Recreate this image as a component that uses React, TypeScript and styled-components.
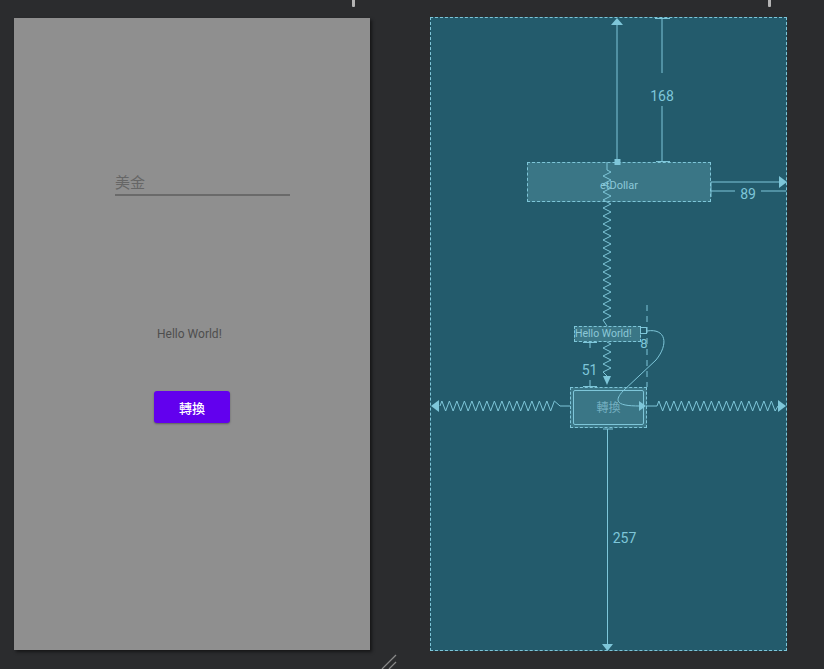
import React from "react";
import styled, { createGlobalStyle } from "styled-components";

const LINE = "#7ec6d9";
const BG = "#2b2c2e";

const GlobalStyle = createGlobalStyle`
  html, body {
    margin: 0;
    padding: 0;
    background: ${BG};
    width: 824px;
    height: 669px;
    overflow: hidden;
  }
`;

const Workspace = styled.div`
  position: relative;
  width: 824px;
  height: 669px;
  box-sizing: border-box;
  padding: 17px 0 0 14px;
  display: flex;
  align-items: flex-start;
  gap: 60px;
  font-family: Roboto, "Noto Sans CJK TC", sans-serif;
`;

const DevicePreview = styled.div`
  width: 356px;
  height: 632px;
  margin-top: 1px;
  background: #8f8f8f;
  box-shadow: 2px 2px 3px rgba(0, 0, 0, 0.5);
  display: flex;
  flex-direction: column;
  align-items: flex-start;
`;

const EditText = styled.div`
  margin: 154px 0 0 101px;
  width: 175px;
  border-bottom: 2px solid #6a6a6a;
  font-family: Roboto, "Noto Sans CJK TC", sans-serif;
  font-size: 15px;
  line-height: 22px;
  color: #666666;
`;

const Label = styled.div`
  margin: 131px 0 0 143px;
  font-family: Roboto, sans-serif;
  font-size: 12px;
  line-height: 14px;
  color: #4e4e4e;
`;

const PrimaryButton = styled.div`
  margin: 50px 0 0 140px;
  width: 76px;
  height: 32px;
  border-radius: 3px;
  background: #6200ee;
  box-shadow: 0 1px 2px rgba(0, 0, 0, 0.35);
  display: flex;
  align-items: center;
  justify-content: center;
  color: #ffffff;
  font-family: "Noto Sans CJK TC", sans-serif;
  font-size: 13px;
  font-weight: 500;
`;

const Blueprint = styled.div`
  position: relative;
  width: 357px;
  height: 634px;
  box-sizing: border-box;
  border: 1px dashed ${LINE};
  background: #235b6c;
`;

const Widget = styled.div<{
  $x: number;
  $y: number;
  $w: number;
  $h: number;
  $size: number;
  $start?: boolean;
  $dy?: number;
}>`
  position: absolute;
  left: ${(p) => p.$x - 431}px;
  top: ${(p) => p.$y - 18}px;
  width: ${(p) => p.$w}px;
  height: ${(p) => p.$h}px;
  box-sizing: border-box;
  border: 1px dashed ${LINE};
  background: #3a7686;
  padding-top: ${(p) => p.$dy ?? 0}px;
  display: flex;
  align-items: center;
  justify-content: ${(p) => (p.$start ? "flex-start" : "center")};
  color: #8cc8d8;
  font-family: Roboto, "Noto Sans CJK TC", sans-serif;
  font-size: ${(p) => p.$size}px;
  line-height: 1;
  white-space: nowrap;
  overflow: hidden;
`;

const InnerFrame = styled.div`
  flex: 1;
  align-self: stretch;
  margin: 2px;
  border: 1px solid ${LINE};
  border-radius: 2px;
  display: flex;
  align-items: center;
  justify-content: center;
  color: #74afc0;
`;

const ConstraintLayer = styled.svg`
  position: absolute;
  left: -1px;
  top: -1px;
  pointer-events: none;
  overflow: visible;
`;

const ScrollTick = styled.div<{ $x: number }>`
  position: absolute;
  left: ${(p) => p.$x}px;
  top: 0;
  width: 3px;
  height: 7px;
  border-radius: 0 0 1px 1px;
  background: #b4b4b4;
`;

const ResizeGrip = styled.svg`
  position: absolute;
  left: 378px;
  top: 652px;
`;

function zigV(x: number, y1: number, y2: number, amp = 4, half = 4) {
  const parts = [`M${x},${y1}`];
  let s = 1;
  for (let y = y1 + half / 2; y < y2 - half / 2; y += half) {
    parts.push(`L${x + amp * s},${y}`);
    s = -s;
  }
  parts.push(`L${x},${y2}`);
  return parts.join(" ");
}

function zigH(y: number, x1: number, x2: number, amp = 5, half = 3.75) {
  const parts = [`M${x1},${y}`];
  let s = -1;
  for (let x = x1 + half / 2; x < x2 - half / 2; x += half) {
    parts.push(`L${x},${y + amp * s}`);
    s = -s;
  }
  parts.push(`L${x2},${y}`);
  return parts.join(" ");
}

const dimText = {
  fill: LINE,
  fontFamily: "Roboto, sans-serif",
  fontSize: 14,
  textAnchor: "middle" as const,
};

export default function App() {
  return (
    <>
      <GlobalStyle />
      <Workspace>
        <ScrollTick $x={352} />
        <ScrollTick $x={768} />
        <DevicePreview>
          <EditText>美金</EditText>
          <Label>Hello World!</Label>
          <PrimaryButton>轉換</PrimaryButton>
        </DevicePreview>

        <Blueprint>
          <Widget $x={527} $y={162} $w={184} $h={40} $size={11} $dy={6}>
            etDollar
          </Widget>
          <Widget $x={574} $y={326} $w={67} $h={16} $size={10.5} $start>
            Hello World!
          </Widget>
          <Widget $x={570} $y={387} $w={77} $h={41} $size={12}>
            <InnerFrame>轉換</InnerFrame>
          </Widget>

          <ConstraintLayer width={357} height={634} viewBox="430 17 357 634">
            <g stroke={LINE} strokeWidth={1} fill="none">
              {/* top constraint of etDollar */}
              <line x1={617} y1={19} x2={617} y2={161} />
              <line x1={662} y1={18} x2={662} y2={73} />
              <line x1={662} y1={106} x2={662} y2={161} />
              <line x1={655} y1={18.5} x2={670} y2={18.5} />
              <line x1={656} y1={161.5} x2={670} y2={161.5} />

              {/* right constraint of etDollar */}
              <line x1={711} y1={182} x2={780} y2={182} />
              <line x1={711} y1={191} x2={735} y2={191} />
              <line x1={761} y1={191} x2={786} y2={191} />
              <line x1={711} y1={182} x2={711} y2={197} />

              {/* spring etDollar -> Hello */}
              <line x1={607} y1={162} x2={607} y2={170} />
              <path d={zigV(607, 170, 326)} />

              {/* Hello -> button */}
              <path d={zigV(607, 342, 376)} />
              <line x1={583} y1={342.5} x2={597} y2={342.5} />
              <line x1={590} y1={342} x2={590} y2={348} />
              <line x1={583} y1={386.5} x2={597} y2={386.5} />
              <line x1={590} y1={380} x2={590} y2={387} />

              {/* Hello right anchor + dashed guide */}
              <rect x={640.5} y={327.5} width={6} height={6} />
              <line x1={647} y1={305} x2={647} y2={387} strokeDasharray="6 5" />
              <path d="M647,331 C666,328 669,344 656,360 L623,391 C612,403 620,406 640,406" />

              {/* horizontal springs of button */}
              <path d={zigH(406, 440, 560)} />
              <line x1={560} y1={406} x2={570} y2={406} />
              <line x1={646} y1={406} x2={657} y2={406} />
              <path d={zigH(406, 657, 778)} />

              {/* bottom constraint of button */}
              <line x1={603} y1={429} x2={613} y2={429} />
              <line x1={607.5} y1={429} x2={607.5} y2={645} />
            </g>

            <g fill={LINE}>
              <polygon points="611,25 623,25 617,18" />
              <rect x={614.5} y={159} width={6} height={6} />
              <polygon points="779,176 787,182 779,188" />
              <polygon points="603,376 611,376 607,385" />
              <polygon points="639,401 646,406 639,411" />
              <polygon points="439,400 431,406 439,412" />
              <polygon points="778,400 786,406 778,412" />
              <polygon points="602,644 613,644 607.5,651" />
            </g>

            <text x={662} y={101} {...dimText}>168</text>
            <text x={748} y={199} {...dimText}>89</text>
            <text x={589.5} y={375} {...dimText}>51</text>
            <text x={644} y={348} {...dimText} fontSize={13}>8</text>
            <text x={624.5} y={543} {...dimText}>257</text>
          </ConstraintLayer>
        </Blueprint>

        <ResizeGrip width={20} height={17} viewBox="378 652 20 17">
          <g stroke="#8a8a8a" strokeWidth={1.2}>
            <line x1={382} y1={669} x2={396} y2={655} />
            <line x1={389} y1={669} x2={396} y2={662} />
          </g>
        </ResizeGrip>
      </Workspace>
    </>
  );
}
